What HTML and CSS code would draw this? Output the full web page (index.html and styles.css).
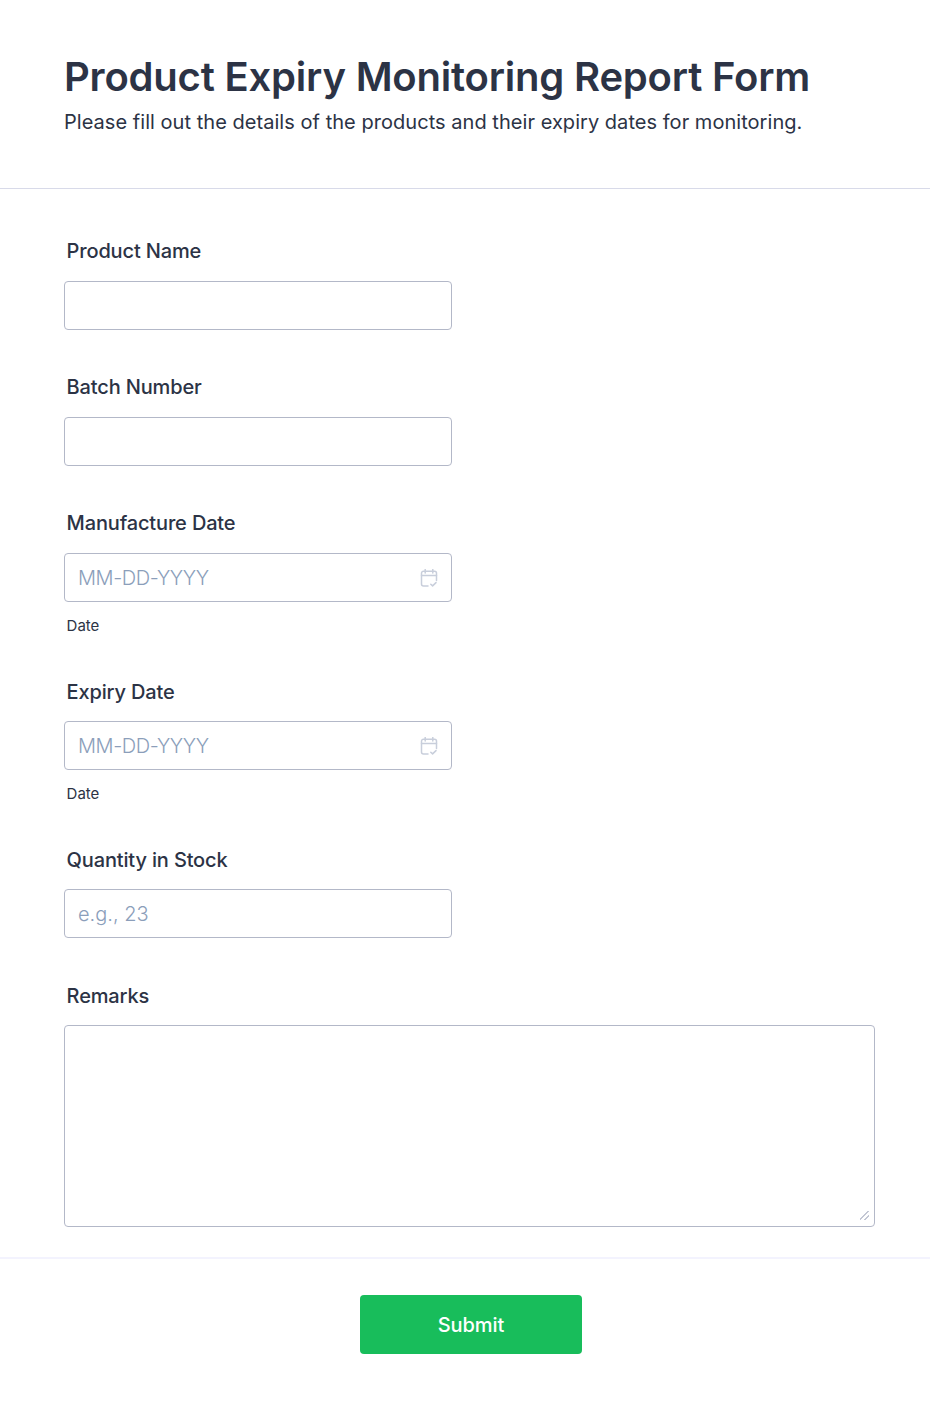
FILE: index.html
```html
<!DOCTYPE html>
<html lang="en">
<head>
  <meta charset="UTF-8" />
  <meta name="viewport" content="width=device-width, initial-scale=1.0"/>
  <title>Product Expiry Monitoring Report Form</title>
  <link rel="stylesheet" href="styles.css">
</head>
<body>

<header class="entete">
  <h1>Product Expiry Monitoring Report Form</h1>
  <p>Please fill out the details of the products and their expiry dates for monitoring.</p>
</header>

<form class="formulaire">
  <div class="champs">
    <div class="ligne">
      <label for="produit">Product Name</label>
      <input class="saisie" id="produit" type="text">
    </div>

    <div class="ligne">
      <label for="lot">Batch Number</label>
      <input class="saisie" id="lot" type="text">
    </div>

    <div class="ligne">
      <label for="fabrication">Manufacture Date</label>
      <div class="date">
        <input class="saisie" id="fabrication" type="text" placeholder="MM-DD-YYYY">
        <svg class="calendrier" viewBox="0 0 18 18" fill="none" stroke="currentColor" stroke-width="1.5" stroke-linecap="round" stroke-linejoin="round">
          <path d="M8 17H3.5a2 2 0 0 1-2-2V4.2a2 2 0 0 1 2-2h11a2 2 0 0 1 2 2v7.3"/>
          <path d="M1.5 6.6h15M5.2 .5v3.6M12.8 .5v3.6"/>
          <path d="M10.8 15.2l1.8 1.7 3.4-3.3"/>
        </svg>
      </div>
      <span class="aide">Date</span>
    </div>

    <div class="ligne">
      <label for="expiration">Expiry Date</label>
      <div class="date">
        <input class="saisie" id="expiration" type="text" placeholder="MM-DD-YYYY">
        <svg class="calendrier" viewBox="0 0 18 18" fill="none" stroke="currentColor" stroke-width="1.5" stroke-linecap="round" stroke-linejoin="round">
          <path d="M8 17H3.5a2 2 0 0 1-2-2V4.2a2 2 0 0 1 2-2h11a2 2 0 0 1 2 2v7.3"/>
          <path d="M1.5 6.6h15M5.2 .5v3.6M12.8 .5v3.6"/>
          <path d="M10.8 15.2l1.8 1.7 3.4-3.3"/>
        </svg>
      </div>
      <span class="aide">Date</span>
    </div>

    <div class="ligne">
      <label for="quantite">Quantity in Stock</label>
      <input class="saisie" id="quantite" type="text" placeholder="e.g., 23">
    </div>

    <div class="ligne">
      <label for="remarques">Remarks</label>
      <textarea class="remarques" id="remarques"></textarea>
    </div>
  </div>

  <div class="envoi">
    <button class="soumettre" type="button">Submit</button>
  </div>
</form>

</body>
</html>
```

FILE: styles.css
```css
* {
  box-sizing: border-box;
}
body {
  margin: 0;
  background: #fff;
  color: #2c3345;
  font-family: Inter, sans-serif;
}
.entete {
  height: 189px;
  padding: 52px 64px 0;
  border-bottom: 1px solid #d8dae9;
}
.entete h1 {
  margin: 0;
  font-size: 40px;
  line-height: 50px;
  font-weight: 600;
  letter-spacing: -0.2px;
}
.entete p {
  margin: 5px 0 0;
  font-size: 20px;
  line-height: 30px;
  letter-spacing: 0.04px;
}
.champs {
  display: flex;
  flex-direction: column;
  gap: 45.5px;
  padding: 50.3px 55px 29.3px 64px;
  border-bottom: 2px solid #f3f3fe;
}
.ligne {
  display: flex;
  flex-direction: column;
  align-items: flex-start;
}
.ligne label {
  margin: 0 0 17.5px 2.6px;
  font-size: 20px;
  line-height: 24px;
  font-weight: 500;
  letter-spacing: -0.15px;
}
.date {
  position: relative;
}
.saisie {
  display: block;
  width: 388px;
  height: 49px;
  padding: 0.5px 13px 0;
  border: 1px solid #b3b8c8;
  border-radius: 4px;
  background: #fff;
  color: #2c3345;
  font-family: inherit;
  font-size: 20px;
  font-weight: 300;
}
.saisie::placeholder {
  color: #8b9eba;
  opacity: 1;
}
.date .saisie::placeholder {
  letter-spacing: -0.4px;
}
.calendrier {
  position: absolute;
  top: 16px;
  right: 14px;
  width: 18px;
  height: 18px;
  color: #c8cedb;
}
.aide {
  margin: 15px 0 0 2.6px;
  font-size: 15px;
  line-height: 17.3px;
}
.remarques {
  display: block;
  width: 100%;
  height: 202px;
  border: 1px solid #b3b8c8;
  border-radius: 4px;
  background: #fff;
}
.remarques::-webkit-resizer {
  background: linear-gradient(135deg, transparent 44%, #c3c7d4 44%, #c3c7d4 54%, transparent 54%, transparent 72%, #c3c7d4 72%, #c3c7d4 82%, transparent 82%) 1px 0 / 9px 9px no-repeat;
}
.envoi {
  display: flex;
  justify-content: center;
  padding: 36.5px 0 50px 12px;
}
.soumettre {
  width: 222px;
  height: 59px;
  border: none;
  border-radius: 4px;
  background: #18bd5b;
  color: #fff;
  font-family: inherit;
  font-size: 20px;
  font-weight: 500;
  letter-spacing: -0.05px;
  cursor: pointer;
}
```
